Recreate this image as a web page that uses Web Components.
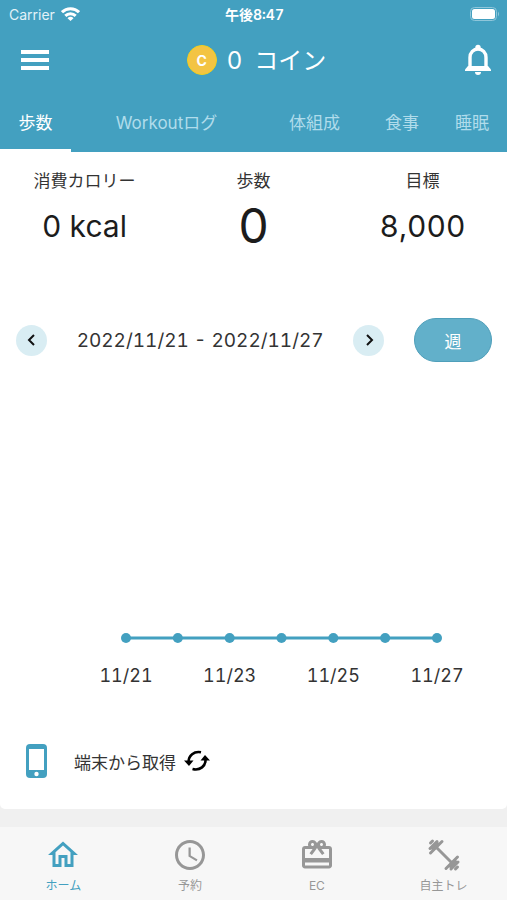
<!DOCTYPE html>
<html lang="ja">
<head>
  <meta charset="UTF-8">
  <meta name="viewport" content="width=device-width, initial-scale=1.0">
  <title>ホーム</title>
  <style>
    :root {
      --main: #43a0c0;
      --text: #333333;
    }
    body {
      margin: 0;
      font-family: Inter, "Noto Sans CJK JP", sans-serif;
      font-variant-numeric: tabular-nums;
      color: var(--text);
      background-color: #f0f0f0;
    }
  </style>
</head>
<body>
  <home-page></home-page>

  <script>
    class StatusBar extends HTMLElement {
      constructor() {
        super();
        this.attachShadow({ mode: 'open' });
        this.shadowRoot.innerHTML = `
          <style>
            :host {
              display: grid;
              grid-template-columns: 1fr auto 1fr;
              align-items: center;
              height: 28px;
              padding: 0 7px 0 9px;
              color: #ffffff;
              font-size: 14px;
            }
            .carrier {
              display: flex;
              align-items: center;
              gap: 6px;
              color: #e2f2f8;
            }
            .time {
              font-weight: 600;
            }
            .battery {
              justify-self: end;
            }
            svg {
              display: block;
            }
          </style>
          <div class="carrier">
            <span>Carrier</span>
            <svg width="19" height="14" viewBox="0 0 19 14" fill="none" stroke="#fff" stroke-width="3">
              <path d="M1 5.2a12 12 0 0 1 17 0"/>
              <path d="M4.3 8.9a7.4 7.4 0 0 1 10.4 0"/>
              <path d="M9.5 14 6.5 11.2a4 4 0 0 1 6 0z" fill="#fff" stroke="none"/>
            </svg>
          </div>
          <span class="time">午後8:47</span>
          <svg class="battery" width="30" height="14" viewBox="0 0 30 14">
            <rect x="0.5" y="0.5" width="26" height="13" rx="4" fill="none" stroke="#8fc6da"/>
            <rect x="2" y="2" width="23" height="10" rx="2.5" fill="#fff"/>
            <path d="M28 4.5q2 2.5 0 5z" fill="#8fc6da"/>
          </svg>
        `;
      }
    }

    class TitleBar extends HTMLElement {
      constructor() {
        super();
        this.attachShadow({ mode: 'open' });
        this.shadowRoot.innerHTML = `
          <style>
            :host {
              display: flex;
              align-items: center;
              justify-content: space-between;
              height: 64px;
              padding: 0 11px 0 17px;
              color: #ffffff;
            }
            button {
              display: flex;
              align-items: center;
              justify-content: center;
              width: 36px;
              height: 36px;
              padding: 0;
              border: none;
              background: none;
            }
            .title {
              display: flex;
              align-items: center;
              gap: 10px;
              margin: 0;
              font-size: 24px;
              font-weight: 400;
            }
            .amount {
              display: flex;
              align-items: baseline;
              gap: 12px;
              padding-bottom: 4px;
            }
          </style>
          <button type="button" aria-label="メニュー">
            <svg width="28" height="20" viewBox="0 0 28 20" fill="#fff">
              <path d="M0 0h28v4H0zM0 8h28v4H0zM0 16h28v4H0z"/>
            </svg>
          </button>
          <h1 class="title">
            <coin-icon></coin-icon>
            <span class="amount"><slot></slot></span>
          </h1>
          <button type="button" aria-label="お知らせ">
            <svg width="26" height="32" viewBox="0 0 26 32">
              <path d="M5 24V13.5C5 8.5 8.5 5 13 5s8 3.5 8 8.5V24" fill="none" stroke="#fff" stroke-width="3.4"/>
              <circle cx="13" cy="3.5" r="2.7" fill="#fff"/>
              <path d="M0 27v-1.5L3 22h20l3 3.500V27z" fill="#fff"/>
              <path d="M10 28h6a3 3 0 0 1-6 0z" fill="#fff"/>
            </svg>
          </button>
        `;
      }
    }

    class CoinIcon extends HTMLElement {
      constructor() {
        super();
        this.attachShadow({ mode: 'open' });
        this.shadowRoot.innerHTML = `
          <style>
            :host {
              display: flex;
              align-items: center;
              justify-content: center;
              box-sizing: border-box;
              width: 30px;
              height: 30px;
              border: 1px solid #f2d01c;
              border-radius: 50%;
              background-color: #f3c443;
              color: #ffffff;
              font-size: 14px;
              font-weight: 700;
            }
          </style>
          <span>C</span>
        `;
      }
    }

    class TabBar extends HTMLElement {
      constructor() {
        super();
        this.attachShadow({ mode: 'open' });
        this.shadowRoot.innerHTML = `
          <style>
            :host {
              display: grid;
              grid-template-columns: 71fr 191fr 105fr 70fr 70fr;
              height: 60px;
            }
            button {
              padding: 2px 0 0;
              border: none;
              border-bottom: 3px solid transparent;
              background: none;
              color: #b0dceb;
              font-family: inherit;
              font-size: 17px;
              white-space: nowrap;
            }
            button[aria-selected="true"] {
              border-bottom-color: #ffffff;
              color: #ffffff;
            }
          </style>
          <button type="button" role="tab" aria-selected="true">歩数</button>
          <button type="button" role="tab">Workoutログ</button>
          <button type="button" role="tab">体組成</button>
          <button type="button" role="tab">食事</button>
          <button type="button" role="tab">睡眠</button>
        `;
      }
    }

    class StatItem extends HTMLElement {
      constructor() {
        super();
        this.attachShadow({ mode: 'open' });
        this.shadowRoot.innerHTML = `
          <style>
            :host {
              display: flex;
              flex-direction: column;
              align-items: center;
            }
            .label {
              font-size: 17px;
              line-height: 26px;
            }
            .value {
              font-size: 30px;
              line-height: 64px;
              color: #1c1c1c;
            }
            :host([large]) .value {
              font-size: 48px;
            }
          </style>
          <span class="label"><slot name="label"></slot></span>
          <span class="value"><slot></slot></span>
        `;
      }
    }

    class PeriodPicker extends HTMLElement {
      constructor() {
        super();
        this.attachShadow({ mode: 'open' });
        this.shadowRoot.innerHTML = `
          <style>
            :host {
              display: flex;
              align-items: center;
              justify-content: space-between;
              padding: 0 15px 0 16px;
            }
            button {
              padding: 0;
              border: none;
              font-family: inherit;
            }
            .arrow {
              display: flex;
              align-items: center;
              justify-content: center;
              width: 31px;
              height: 31px;
              border-radius: 50%;
              background-color: #d9edf3;
            }
            .range {
              font-size: 19px;
              white-space: nowrap;
            }
            .unit {
              width: 78px;
              height: 44px;
              border: 1px solid #4f9fba;
              border-radius: 22px;
              background-color: #62b0ca;
              color: #ffffff;
              font-size: 17px;
            }
          </style>
          <button type="button" class="arrow" aria-label="前へ">
            <svg width="12" height="12" viewBox="0 0 12 12" fill="none" stroke="#111" stroke-width="2">
              <path d="M8 1 3 6l5 5"/>
            </svg>
          </button>
          <span class="range"><slot></slot></span>
          <button type="button" class="arrow" aria-label="次へ">
            <svg width="12" height="12" viewBox="0 0 12 12" fill="none" stroke="#111" stroke-width="2">
              <path d="m4 1 5 5-5 5"/>
            </svg>
          </button>
          <button type="button" class="unit">週</button>
        `;
      }
    }

    class StepChart extends HTMLElement {
      constructor() {
        super();
        this.attachShadow({ mode: 'open' });

        // labels stand under every second point
        const days = ['11/21', '', '11/23', '', '11/25', '', '11/27'];
        const y = 246;
        const points = days.map((day, i) => {
          const x = (i * 100) / (days.length - 1) + '%';
          const label = day ? `<text x="${x}" y="${y + 44}">${day}</text>` : '';
          return `<circle cx="${x}" cy="${y}" r="5"/>${label}`;
        }).join('');

        this.shadowRoot.innerHTML = `
          <style>
            :host {
              display: block;
              padding: 0 70px 0 126px;
            }
            svg {
              display: block;
              width: 100%;
              height: 300px;
              overflow: visible;
            }
            line {
              stroke: var(--main);
              stroke-width: 3px;
            }
            circle {
              fill: var(--main);
            }
            text {
              fill: var(--text);
              font-size: 18px;
              text-anchor: middle;
            }
          </style>
          <svg role="img" aria-label="歩数">
            <line x1="0%" y1="${y}" x2="100%" y2="${y}"/>
            ${points}
          </svg>
        `;
      }
    }

    class DeviceSync extends HTMLElement {
      constructor() {
        super();
        this.attachShadow({ mode: 'open' });
        this.shadowRoot.innerHTML = `
          <style>
            :host {
              display: flex;
              align-items: center;
              gap: 26px;
              padding: 0 26px;
            }
            button {
              display: flex;
              align-items: center;
              gap: 8px;
              padding: 0;
              border: none;
              background: none;
              color: inherit;
              font-family: inherit;
              font-size: 17px;
            }
          </style>
          <svg width="22" height="34" viewBox="0 0 22 34">
            <rect width="21" height="34" rx="4" fill="#43a0c0"/>
            <rect x="3" y="5" width="15" height="21" fill="#fff"/>
            <circle cx="10.5" cy="30" r="2.2" fill="#fff"/>
          </svg>
          <button type="button">
            <span><slot></slot></span>
            <svg width="26" height="22" viewBox="0 0 26 22">
              <path d="M4.5 12C4.5 5.500 10 .8 17 2.200M21.500 9c.5 7-5.500 12-13 10" fill="none" stroke="#000" stroke-width="2.600"/>
              <path d="M0 10.500h9.500L5 16zM16.500 10.500H26L21 5z" fill="#000"/>
            </svg>
          </button>
        `;
      }
    }

    class NavItem extends HTMLElement {
      constructor() {
        super();
        this.attachShadow({ mode: 'open' });
        this.shadowRoot.innerHTML = `
          <style>
            :host {
              display: block;
              color: #979797;
            }
            :host([active]) {
              color: var(--main);
            }
            a {
              display: flex;
              flex-direction: column;
              align-items: center;
              gap: 4px;
              padding-top: 10px;
              color: inherit;
              font-size: 12px;
              line-height: 18px;
              text-decoration: none;
            }
          </style>
          <a href="#"><slot name="icon"></slot><span><slot></slot></span></a>
        `;
      }
    }

    class BottomNav extends HTMLElement {
      constructor() {
        super();
        this.attachShadow({ mode: 'open' });
        this.shadowRoot.innerHTML = `
          <style>
            :host {
              display: block;
            }
            nav {
              display: grid;
              grid-template-columns: repeat(4, 1fr);
              height: 73px;
              background-color: #f7f7f7;
            }
            svg {
              display: block;
              width: 36px;
              height: 36px;
              fill: currentColor;
            }
          </style>
          <nav>
            <nav-item active>
              <svg slot="icon" viewBox="0 0 24 24">
                <path d="M12 5.690l5 4.500V18h-2v-6H9v6H7v-7.810l5-4.500M12 3 2 12h3v8h6v-6h2v6h6v-8h3L12 3z"/>
              </svg>
              ホーム
            </nav-item>
            <nav-item>
              <svg slot="icon" viewBox="0 0 24 24">
                <path d="M11.990 2C6.470 2 2 6.480 2 12s4.470 10 9.990 10C17.520 22 22 17.520 22 12S17.520 2 11.990 2zM12 20c-4.420 0-8-3.580-8-8s3.580-8 8-8 8 3.580 8 8-3.580 8-8 8zm.5-13H11v6l5.250 3.150.75-1.230-4.500-2.670z"/>
              </svg>
              予約
            </nav-item>
            <nav-item>
              <svg slot="icon" viewBox="0 0 24 24">
                <path d="M20 6h-2.180c.11-.31.18-.65.18-1 0-1.660-1.340-3-3-3-1.050 0-1.960.54-2.500 1.350l-.5.67-.5-.68C10.960 2.540 10.050 2 9 2 7.340 2 6 3.340 6 5c0 .35.07.69.18 1H4c-1.110 0-1.990.89-1.990 2L2 19c0 1.110.89 2 2 2h16c1.110 0 2-.89 2-2V8c0-1.110-.89-2-2-2zm-5-2c.55 0 1 .45 1 1s-.45 1-1 1-1-.45-1-1 .45-1 1-1zM9 4c.55 0 1 .45 1 1s-.45 1-1 1-1-.45-1-1 .45-1 1-1zm11 15H4v-2h16v2zm0-5H4V8h5.080L7 10.830 8.620 12 11 8.760l1-1.360 1 1.360L15.380 12 17 10.830 14.920 8H20v6z"/>
              </svg>
              EC
            </nav-item>
            <nav-item>
              <svg slot="icon" viewBox="0 0 36 36" stroke="currentColor" stroke-linecap="round">
                <path d="m9 9 18 18" stroke-width="3"/>
                <path d="m5.500 12.500 7-7M23.500 30.500l7-7" stroke-width="5" stroke-linecap="butt"/>
                <path d="m4.500 16 11.500-11.500M4 11.500l7-7M4.500 6l2-2M20 31.500 31.500 20M25 32l7-7M29.500 32l2-2" stroke-width="3"/>
              </svg>
              自主トレ
            </nav-item>
          </nav>
        `;
      }
    }

    class HomePage extends HTMLElement {
      constructor() {
        super();
        this.attachShadow({ mode: 'open' });
        this.shadowRoot.innerHTML = `
          <style>
            :host {
              display: flex;
              flex-direction: column;
              min-height: 100vh;
            }
            header {
              background-color: var(--main);
            }
            main {
              padding: 16px 0 31px;
              border-radius: 0 0 5px 5px;
              background-color: #ffffff;
            }
            .stats {
              display: grid;
              grid-template-columns: repeat(3, 1fr);
              margin-bottom: 60px;
            }
            period-picker {
              margin-bottom: 30px;
            }
            step-chart {
              margin-bottom: 52px;
            }
            bottom-nav {
              margin-top: auto;
            }
          </style>
          <header>
            <status-bar></status-bar>
            <title-bar><span>0</span><span>コイン</span></title-bar>
            <tab-bar></tab-bar>
          </header>
          <main>
            <div class="stats">
              <stat-item><span slot="label">消費カロリー</span>0 kcal</stat-item>
              <stat-item large><span slot="label">歩数</span>0</stat-item>
              <stat-item><span slot="label">目標</span>8,000</stat-item>
            </div>
            <period-picker>2022/11/21 - 2022/11/27</period-picker>
            <step-chart></step-chart>
            <device-sync>端末から取得</device-sync>
          </main>
          <bottom-nav></bottom-nav>
        `;
      }
    }

    customElements.define('status-bar', StatusBar);
    customElements.define('coin-icon', CoinIcon);
    customElements.define('title-bar', TitleBar);
    customElements.define('tab-bar', TabBar);
    customElements.define('stat-item', StatItem);
    customElements.define('period-picker', PeriodPicker);
    customElements.define('step-chart', StepChart);
    customElements.define('device-sync', DeviceSync);
    customElements.define('nav-item', NavItem);
    customElements.define('bottom-nav', BottomNav);
    customElements.define('home-page', HomePage);
  </script>
</body>
</html>
